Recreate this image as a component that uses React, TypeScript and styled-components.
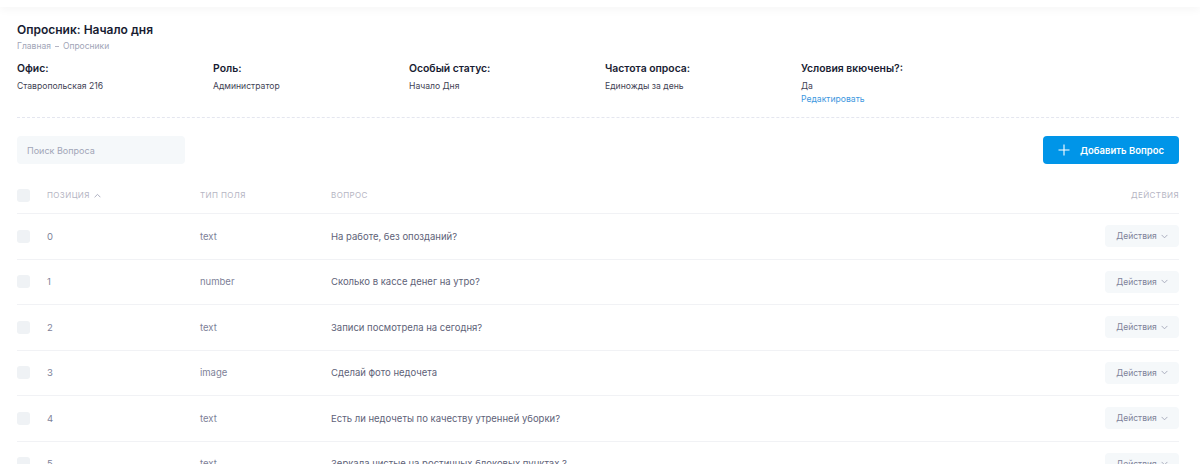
import styled, { createGlobalStyle } from "styled-components";

const GlobalStyle = createGlobalStyle`
  body {
    margin: 0;
    background: #ffffff;
    font-family: Inter, "Noto Sans", sans-serif;
    color: #181c32;
  }
`;

const TopBar = styled.div`
  height: 7px;
  background: #ffffff;
  box-shadow: 0 2px 10px rgba(0, 0, 0, 0.05);
`;

const Page = styled.div`
  padding: 15px 21px 0 17px;
`;

const Title = styled.h1`
  margin: 0;
  font-size: 12px;
  font-weight: 600;
  color: #181c32;
  line-height: 16px;
`;

const Crumbs = styled.div`
  margin-top: 3px;
  display: flex;
  align-items: center;
  gap: 4px;
  font-size: 8.5px;
  color: #a1a5b7;
`;

const Dot = styled.span`
  width: 4px;
  height: 1px;
  background: #b5b5c3;
`;

const InfoGrid = styled.div`
  margin-top: 11px;
  display: grid;
  grid-template-columns: repeat(5, 196px);
  padding-bottom: 12px;
  border-bottom: 1px dashed #e4e6ef;
`;

const InfoItem = styled.div`
  display: flex;
  flex-direction: column;
`;

const InfoLabel = styled.div`
  font-size: 10.4px;
  font-weight: 600;
  color: #181c32;
  line-height: 13px;
`;

const InfoValue = styled.div`
  margin-top: 6px;
  font-size: 8.6px;
  color: #3f4254;
  line-height: 11px;
`;

const EditLink = styled.a`
  margin-top: 2px;
  font-size: 8.6px;
  color: #3e97e0;
  line-height: 11px;
  cursor: pointer;
`;

const Toolbar = styled.div`
  margin-top: 18px;
  display: flex;
  justify-content: space-between;
  align-items: center;
`;

const Search = styled.input`
  width: 168px;
  height: 28px;
  box-sizing: border-box;
  border: none;
  border-radius: 4px;
  background: #f5f8fa;
  padding: 0 10px;
  font-family: inherit;
  font-size: 9px;
  color: #5e6278;
  outline: none;
  &::placeholder {
    color: #a1a5b7;
  }
`;

const AddButton = styled.button`
  width: 136px;
  height: 28px;
  border: none;
  border-radius: 4px;
  background: #0095e8;
  color: #ffffff;
  font-family: inherit;
  font-size: 9.5px;
  font-weight: 600;
  display: flex;
  align-items: center;
  justify-content: center;
  gap: 10px;
  padding: 0;
`;

const Table = styled.div`
  margin-top: 13px;
`;

const Row = styled.div<{ $head?: boolean }>`
  display: grid;
  grid-template-columns: 30px 153px 131px 1fr 120px;
  align-items: center;
  height: ${({ $head }) => ($head ? "37px" : "45.5px")};
  border-bottom: 1px solid #f1f2f5;
  box-sizing: border-box;
`;

const Check = styled.span`
  width: 13px;
  height: 13px;
  border-radius: 3px;
  background: #eff2f5;
  display: block;
`;

const HeadCell = styled.div<{ $right?: boolean }>`
  font-size: 8px;
  text-transform: uppercase;
  letter-spacing: 0.4px;
  color: #b5b5c3;
  display: flex;
  align-items: center;
  gap: 4px;
  justify-content: ${({ $right }) => ($right ? "flex-end" : "flex-start")};
`;

const Cell = styled.div<{ $dim?: boolean }>`
  font-size: 9.5px;
  color: ${({ $dim }) => ($dim ? "#7e8299" : "#5e6278")};
`;

const ActionsCell = styled.div`
  display: flex;
  justify-content: flex-end;
`;

const ActionsButton = styled.button`
  width: 74px;
  height: 22px;
  border: none;
  border-radius: 4px;
  background: #f5f8fa;
  color: #7e8299;
  font-family: inherit;
  font-size: 8.5px;
  display: flex;
  align-items: center;
  justify-content: center;
  gap: 4px;
  padding: 0;
`;

const questions = [
  { pos: 0, type: "text", q: "На работе, без опозданий?" },
  { pos: 1, type: "number", q: "Сколько в кассе денег на утро?" },
  { pos: 2, type: "text", q: "Записи посмотрела на сегодня?" },
  { pos: 3, type: "image", q: "Сделай фото недочета" },
  { pos: 4, type: "text", q: "Есть ли недочеты по качеству утренней уборки?" },
  { pos: 5, type: "text", q: "Зеркала чистые на ростичных блоковых пунктах ?" },
];

const Chevron = ({ up }: { up?: boolean }) => (
  <svg width="7" height="5" viewBox="0 0 8 5" fill="none">
    <path
      d={up ? "M1 4.2L4 1.2L7 4.2" : "M1 1L4 4L7 1"}
      stroke="#a1a5b7"
      strokeWidth="1"
      strokeLinecap="round"
      strokeLinejoin="round"
    />
  </svg>
);

export default function App() {
  return (
    <>
      <GlobalStyle />
      <TopBar />
      <Page>
        <Title>Опросник: Начало дня</Title>
        <Crumbs>
          <span>Главная</span>
          <Dot />
          <span>Опросники</span>
        </Crumbs>

        <InfoGrid>
          <InfoItem>
            <InfoLabel>Офис:</InfoLabel>
            <InfoValue>Ставропольская 216</InfoValue>
          </InfoItem>
          <InfoItem>
            <InfoLabel>Роль:</InfoLabel>
            <InfoValue>Администратор</InfoValue>
          </InfoItem>
          <InfoItem>
            <InfoLabel>Особый статус:</InfoLabel>
            <InfoValue>Начало Дня</InfoValue>
          </InfoItem>
          <InfoItem>
            <InfoLabel>Частота опроса:</InfoLabel>
            <InfoValue>Единожды за день</InfoValue>
          </InfoItem>
          <InfoItem>
            <InfoLabel>Условия вкючены?:</InfoLabel>
            <InfoValue>Да</InfoValue>
            <EditLink>Редактировать</EditLink>
          </InfoItem>
        </InfoGrid>

        <Toolbar>
          <Search placeholder="Поиск Вопроса" />
          <AddButton>
            <svg width="12" height="12" viewBox="0 0 12 12" fill="none">
              <path d="M6 0.5V11.5M0.5 6H11.5" stroke="#ffffff" strokeWidth="1.1" />
            </svg>
            Добавить Вопрос
          </AddButton>
        </Toolbar>

        <Table>
          <Row $head>
            <Check />
            <HeadCell>
              позиция <Chevron up />
            </HeadCell>
            <HeadCell>тип поля</HeadCell>
            <HeadCell>вопрос</HeadCell>
            <HeadCell $right>действия</HeadCell>
          </Row>
          {questions.map((item) => (
            <Row key={item.pos}>
              <Check />
              <Cell $dim>{item.pos}</Cell>
              <Cell $dim>{item.type}</Cell>
              <Cell>{item.q}</Cell>
              <ActionsCell>
                <ActionsButton>
                  Действия <Chevron />
                </ActionsButton>
              </ActionsCell>
            </Row>
          ))}
        </Table>
      </Page>
    </>
  );
}
